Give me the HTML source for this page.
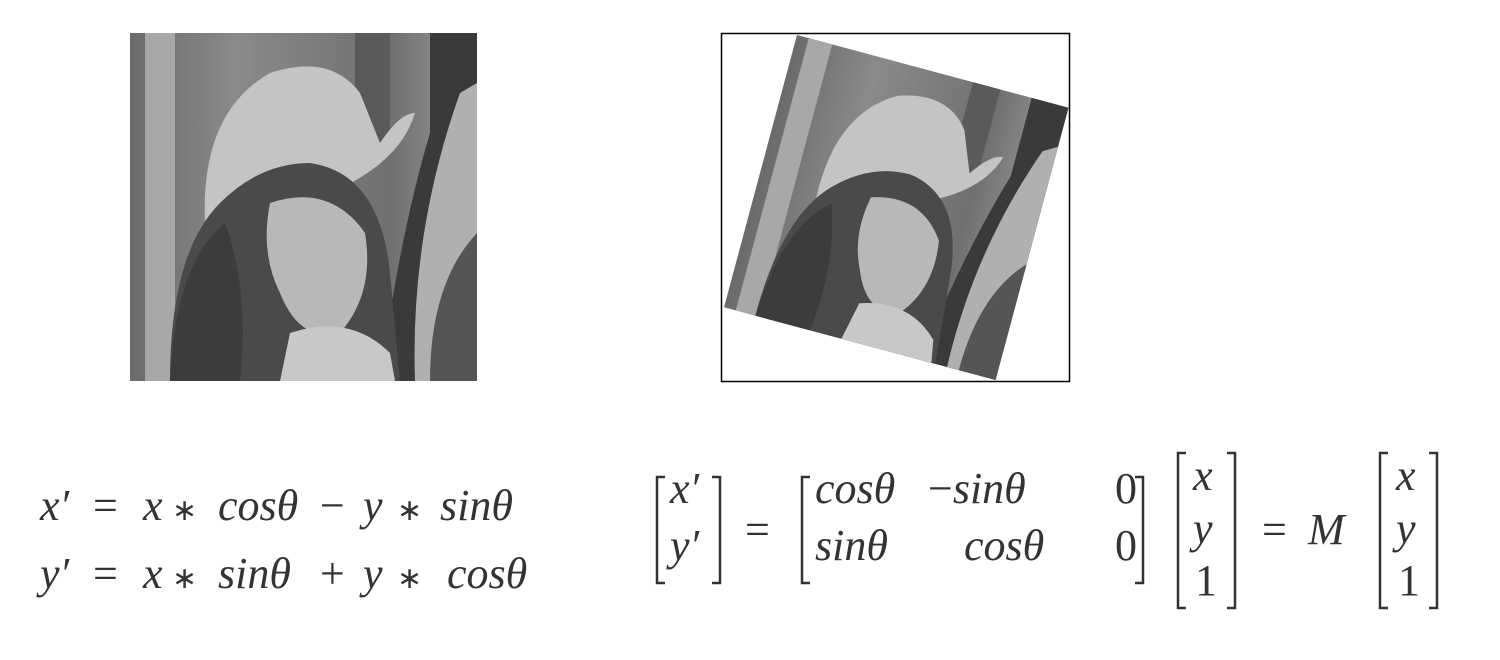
<!DOCTYPE html>
<html><head><meta charset="utf-8"><style>
html,body{margin:0;padding:0;background:#fff;width:1500px;height:660px;overflow:hidden}
text{font-family:"Liberation Serif",serif;fill:#333}
.i{font-style:italic}
.a{font-size:30px}
</style></head><body>
<svg width="1500" height="660" viewBox="0 0 1500 660" xmlns="http://www.w3.org/2000/svg">
<defs>
<linearGradient id="bg" x1="0" y1="0" x2="1" y2="0">
<stop offset="0" stop-color="#6a6a6a"/><stop offset="0.3" stop-color="#8a8a8a"/><stop offset="0.75" stop-color="#707070"/><stop offset="1" stop-color="#9a9a9a"/></linearGradient>
<g id="lena">
<rect x="0" y="0" width="347" height="348" fill="url(#bg)"/>
<rect x="15" y="0" width="30" height="348" fill="#a8a8a8"/>
<rect x="225" y="0" width="35" height="120" fill="#5a5a5a"/>
<path d="M300 0 L347 0 L347 348 L250 348 Q270 200 300 100 Z" fill="#3a3a3a"/>
<path d="M285 348 Q280 200 330 60 L347 50 L347 348 Z" fill="#b0b0b0"/>
<path d="M300 348 Q300 250 347 200 L347 348Z" fill="#555"/>
<path d="M75 190 Q70 80 140 40 Q200 20 230 60 L250 110 Q270 80 285 80 Q270 130 200 160 Q130 190 75 190Z" fill="#c4c4c4"/>
<path d="M40 348 Q40 220 90 170 Q130 130 180 130 Q250 140 260 240 L270 348 Z" fill="#4a4a4a"/>
<path d="M140 170 Q200 150 235 200 Q245 260 210 300 Q170 310 150 260 Q130 220 140 170Z" fill="#b8b8b8"/>
<path d="M160 300 Q220 280 260 320 L265 348 L150 348Z" fill="#c8c8c8"/>
<path d="M40 348 Q45 230 95 190 Q120 260 110 348Z" fill="#3c3c3c"/>
</g>
</defs>
<g transform="translate(130,33)"><use href="#lena"/></g>
<rect x="721.5" y="33.5" width="348" height="348" fill="#fff" stroke="#000" stroke-width="1.5"/>
<g transform="translate(797,35) rotate(15) scale(0.81,0.81)"><use href="#lena"/></g>

<g font-size="44">
<text x="40" y="520" class="i">x′</text><text x="93" y="520">=</text><text x="143" y="520" class="i">x</text><text x="172" y="520" class="a">∗</text><text x="218" y="520" class="i">cosθ</text><text x="320" y="520">−</text><text x="363" y="520" class="i">y</text><text x="397" y="520" class="a">∗</text><text x="440" y="520" class="i">sinθ</text>
<text x="40" y="588" class="i">y′</text><text x="93" y="588">=</text><text x="143" y="588" class="i">x</text><text x="172" y="588" class="a">∗</text><text x="218" y="588" class="i">sinθ</text><text x="320" y="588">+</text><text x="363" y="588" class="i">y</text><text x="397" y="588" class="a">∗</text><text x="447" y="588" class="i">cosθ</text>
</g>
<g fill="none" stroke="#333" stroke-width="2.5">
<path d="M665 477 H657 V583 H665"/><path d="M712 477 H720 V583 H712"/>
<path d="M810 477 H802 V583 H810"/><path d="M1135 477 H1143 V583 H1135"/>
<path d="M1186 453 H1178 V608 H1186"/><path d="M1227 453 H1235 V608 H1227"/>
<path d="M1388 453 H1380 V608 H1388"/><path d="M1429 453 H1437 V608 H1429"/>
</g>
<g font-size="44">
<text x="670" y="503" class="i">x′</text>
<text x="670" y="560" class="i">y′</text>
<text x="745" y="544">=</text>
<text x="815" y="503" class="i">cosθ</text>
<text x="928" y="503"><tspan>−</tspan><tspan class="i">sinθ</tspan></text>
<text x="1115" y="503">0</text>
<text x="815" y="560" class="i">sinθ</text>
<text x="964" y="560" class="i">cosθ</text>
<text x="1115" y="560">0</text>
<text x="1193" y="490" class="i">x</text>
<text x="1193" y="543" class="i">y</text>
<text x="1195" y="595">1</text>
<text x="1262" y="544">=</text>
<text x="1308" y="544" class="i">M</text>
<text x="1396" y="490" class="i">x</text>
<text x="1396" y="543" class="i">y</text>
<text x="1398" y="595">1</text>
</g>
</svg>
</body></html>
